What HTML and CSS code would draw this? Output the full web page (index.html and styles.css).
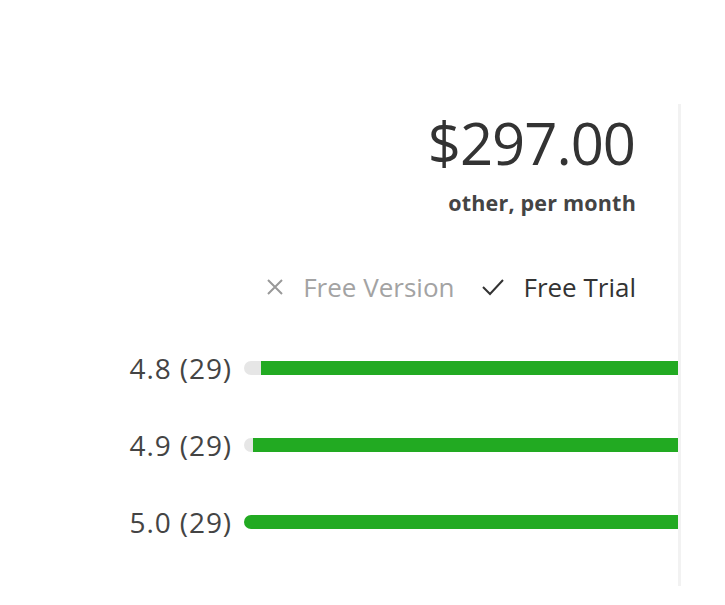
FILE: index.html
```html
<!DOCTYPE html>
<html lang="en">
<head>
  <meta charset="UTF-8" />
  <meta name="viewport" content="width=device-width, initial-scale=1.0"/>
  <title>Pricing</title>
  <link rel="stylesheet" href="styles.css">
</head>
<body>
  <div class="panel">
    <div class="price-block">
      <div class="price">$297.00</div>
      <div class="price-note">other, per month</div>
    </div>

    <div class="features">
      <span class="feature off">
        <svg width="18" height="18" viewBox="0 0 18 18"><path d="M2 2 L16 16 M16 2 L2 16" stroke="#999" stroke-width="2" fill="none"/></svg>
        Free Version
      </span>
      <span class="feature on">
        <svg width="22" height="18" viewBox="0 0 22 18"><path d="M1 9 L8 16 L21 2" stroke="#333" stroke-width="2" fill="none"/></svg>
        Free Trial
      </span>
    </div>

    <div class="ratings">
      <div class="rating-row">
        <span class="rating-label">4.8 (29)</span>
        <div class="track"><div class="fill" style="width: 96%"></div></div>
      </div>
      <div class="rating-row">
        <span class="rating-label">4.9 (29)</span>
        <div class="track"><div class="fill" style="width: 98%"></div></div>
      </div>
      <div class="rating-row">
        <span class="rating-label">5.0 (29)</span>
        <div class="track"><div class="fill" style="width: 100%"></div></div>
      </div>
    </div>
  </div>
</body>
</html>
```

FILE: styles.css
```css
body {
  font-family: 'Open Sans', 'Noto Sans', sans-serif;
  background: #fff;
  color: #333;
  margin: 0;
}

.panel {
  width: 570px;
  margin: 104px 0 0 108px;
  height: 482px;
  border-right: 3px solid #f2f2f2;
  overflow: hidden;
}

.price-block {
  text-align: right;
  padding-right: 42px;
}

.price {
  font-size: 58px;
  line-height: 78px;
  letter-spacing: -1px;
  padding-right: 1px;
  color: #333;
}

.price-note {
  font-size: 21.5px;
  font-weight: 700;
  line-height: 26px;
  margin-top: 8px;
  letter-spacing: 0.2px;
  color: #444;
}

.features {
  display: flex;
  justify-content: flex-end;
  gap: 28px;
  padding-right: 42px;
  margin-top: 55px;
  font-size: 26px;
  line-height: 32px;
}

.feature {
  display: flex;
  align-items: center;
  gap: 19px;
}

.feature.off {
  color: #a3a3a3;
}

.feature.on {
  color: #333;
}

.ratings {
  margin-top: 26px;
}

.rating-row {
  display: flex;
  align-items: center;
  gap: 12px;
  height: 77px;
}

.rating-label {
  width: 124px;
  text-align: right;
  font-size: 28px;
  letter-spacing: 0.9px;
  color: #444;
}

.track {
  flex: 1;
  height: 14px;
  background: #e6e6e6;
  border-radius: 7px 0 0 7px;
  overflow: hidden;
  display: flex;
  justify-content: flex-end;
}

.fill {
  height: 100%;
  background: #22aa22;
}
```
